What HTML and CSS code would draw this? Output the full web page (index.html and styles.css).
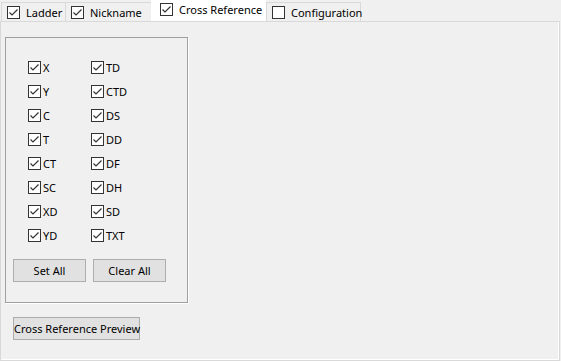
FILE: index.html
```html
<!DOCTYPE html>
<html lang="en">
<head>
    <meta charset="UTF-8">
    <title>Cross Reference</title>
    <link rel="stylesheet" href="styles.css">
</head>
<body>
    <div class="tabs">
        <div class="tab tab-ladder">
            <svg class="cb" width="13" height="13" viewBox="0 0 13 13"><rect x="0.5" y="0.5" width="12" height="12" fill="#fff" stroke="#333"/><path d="M2.5 6.5 L5 9 L10.5 3.5" fill="none" stroke="#333" stroke-width="1.2"/></svg>
            <span>Ladder</span>
        </div>
        <div class="tab tab-nick">
            <svg class="cb" width="13" height="13" viewBox="0 0 13 13"><rect x="0.5" y="0.5" width="12" height="12" fill="#fff" stroke="#333"/><path d="M2.5 6.5 L5 9 L10.5 3.5" fill="none" stroke="#333" stroke-width="1.2"/></svg>
            <span>Nickname</span>
        </div>
        <div class="tab tab-xref active">
            <svg class="cb" width="13" height="13" viewBox="0 0 13 13"><rect x="0.5" y="0.5" width="12" height="12" fill="#fff" stroke="#333"/><path d="M2.5 6.5 L5 9 L10.5 3.5" fill="none" stroke="#333" stroke-width="1.2"/></svg>
            <span>Cross Reference</span>
        </div>
        <div class="tab tab-config">
            <svg class="cb" width="13" height="13" viewBox="0 0 13 13"><rect x="0.5" y="0.5" width="12" height="12" fill="#fff" stroke="#333"/></svg>
            <span>Configuration</span>
        </div>
    </div>

    <div class="pane">
        <div class="group">
            <div class="check-grid">
                <label class="check"><svg class="cb" width="13" height="13" viewBox="0 0 13 13"><rect x="0.5" y="0.5" width="12" height="12" fill="#fff" stroke="#333"/><path d="M2.5 6.5 L5 9 L10.5 3.5" fill="none" stroke="#333" stroke-width="1.2"/></svg><span>X</span></label>
                <label class="check"><svg class="cb" width="13" height="13" viewBox="0 0 13 13"><rect x="0.5" y="0.5" width="12" height="12" fill="#fff" stroke="#333"/><path d="M2.5 6.5 L5 9 L10.5 3.5" fill="none" stroke="#333" stroke-width="1.2"/></svg><span>TD</span></label>
                <label class="check"><svg class="cb" width="13" height="13" viewBox="0 0 13 13"><rect x="0.5" y="0.5" width="12" height="12" fill="#fff" stroke="#333"/><path d="M2.5 6.5 L5 9 L10.5 3.5" fill="none" stroke="#333" stroke-width="1.2"/></svg><span>Y</span></label>
                <label class="check"><svg class="cb" width="13" height="13" viewBox="0 0 13 13"><rect x="0.5" y="0.5" width="12" height="12" fill="#fff" stroke="#333"/><path d="M2.5 6.5 L5 9 L10.5 3.5" fill="none" stroke="#333" stroke-width="1.2"/></svg><span>CTD</span></label>
                <label class="check"><svg class="cb" width="13" height="13" viewBox="0 0 13 13"><rect x="0.5" y="0.5" width="12" height="12" fill="#fff" stroke="#333"/><path d="M2.5 6.5 L5 9 L10.5 3.5" fill="none" stroke="#333" stroke-width="1.2"/></svg><span>C</span></label>
                <label class="check"><svg class="cb" width="13" height="13" viewBox="0 0 13 13"><rect x="0.5" y="0.5" width="12" height="12" fill="#fff" stroke="#333"/><path d="M2.5 6.5 L5 9 L10.5 3.5" fill="none" stroke="#333" stroke-width="1.2"/></svg><span>DS</span></label>
                <label class="check"><svg class="cb" width="13" height="13" viewBox="0 0 13 13"><rect x="0.5" y="0.5" width="12" height="12" fill="#fff" stroke="#333"/><path d="M2.5 6.5 L5 9 L10.5 3.5" fill="none" stroke="#333" stroke-width="1.2"/></svg><span>T</span></label>
                <label class="check"><svg class="cb" width="13" height="13" viewBox="0 0 13 13"><rect x="0.5" y="0.5" width="12" height="12" fill="#fff" stroke="#333"/><path d="M2.5 6.5 L5 9 L10.5 3.5" fill="none" stroke="#333" stroke-width="1.2"/></svg><span>DD</span></label>
                <label class="check"><svg class="cb" width="13" height="13" viewBox="0 0 13 13"><rect x="0.5" y="0.5" width="12" height="12" fill="#fff" stroke="#333"/><path d="M2.5 6.5 L5 9 L10.5 3.5" fill="none" stroke="#333" stroke-width="1.2"/></svg><span>CT</span></label>
                <label class="check"><svg class="cb" width="13" height="13" viewBox="0 0 13 13"><rect x="0.5" y="0.5" width="12" height="12" fill="#fff" stroke="#333"/><path d="M2.5 6.5 L5 9 L10.5 3.5" fill="none" stroke="#333" stroke-width="1.2"/></svg><span>DF</span></label>
                <label class="check"><svg class="cb" width="13" height="13" viewBox="0 0 13 13"><rect x="0.5" y="0.5" width="12" height="12" fill="#fff" stroke="#333"/><path d="M2.5 6.5 L5 9 L10.5 3.5" fill="none" stroke="#333" stroke-width="1.2"/></svg><span>SC</span></label>
                <label class="check"><svg class="cb" width="13" height="13" viewBox="0 0 13 13"><rect x="0.5" y="0.5" width="12" height="12" fill="#fff" stroke="#333"/><path d="M2.5 6.5 L5 9 L10.5 3.5" fill="none" stroke="#333" stroke-width="1.2"/></svg><span>DH</span></label>
                <label class="check"><svg class="cb" width="13" height="13" viewBox="0 0 13 13"><rect x="0.5" y="0.5" width="12" height="12" fill="#fff" stroke="#333"/><path d="M2.5 6.5 L5 9 L10.5 3.5" fill="none" stroke="#333" stroke-width="1.2"/></svg><span>XD</span></label>
                <label class="check"><svg class="cb" width="13" height="13" viewBox="0 0 13 13"><rect x="0.5" y="0.5" width="12" height="12" fill="#fff" stroke="#333"/><path d="M2.5 6.5 L5 9 L10.5 3.5" fill="none" stroke="#333" stroke-width="1.2"/></svg><span>SD</span></label>
                <label class="check"><svg class="cb" width="13" height="13" viewBox="0 0 13 13"><rect x="0.5" y="0.5" width="12" height="12" fill="#fff" stroke="#333"/><path d="M2.5 6.5 L5 9 L10.5 3.5" fill="none" stroke="#333" stroke-width="1.2"/></svg><span>YD</span></label>
                <label class="check"><svg class="cb" width="13" height="13" viewBox="0 0 13 13"><rect x="0.5" y="0.5" width="12" height="12" fill="#fff" stroke="#333"/><path d="M2.5 6.5 L5 9 L10.5 3.5" fill="none" stroke="#333" stroke-width="1.2"/></svg><span>TXT</span></label>
            </div>
            <div class="group-buttons">
                <button class="btn btn-small">Set All</button>
                <button class="btn btn-small">Clear All</button>
            </div>
        </div>
        <button class="btn btn-preview">Cross Reference Preview</button>
    </div>
</body>
</html>
```

FILE: styles.css
```css
* {
    margin: 0;
    padding: 0;
    box-sizing: border-box;
}

body {
    font-family: "Noto Sans", sans-serif;
    font-size: 11px;
    color: #000;
    background: #f0f0f0;
    width: 561px;
    height: 361px;
    overflow: hidden;
}

.cb {
    display: block;
    flex-shrink: 0;
}

/* tab strip */
.tabs {
    display: flex;
    align-items: flex-end;
    height: 21px;
    padding-left: 1px;
    position: relative;
    z-index: 1;
}

.tab {
    display: flex;
    align-items: center;
    height: 19px;
    border: 1px solid #d9d9d9;
    border-bottom: none;
    border-right: none;
    background: #f0f0f0;
    padding-left: 5px;
    gap: 6px;
}

.tab-ladder { width: 64px; }
.tab-nick { width: 86px; }
.tab-xref { width: 115px; }
.tab-config { width: 95px; border-right: 1px solid #d9d9d9; }

.tab.active {
    height: 22px;
    background: #fff;
    border-color: #fff;
    padding-left: 8px;
    padding-bottom: 2px;
}

/* tab page */
.pane {
    width: 560px;
    height: 340px;
    border: 1px solid #d9d9d9;
    box-shadow: inset -1px -1px 0 #fff;
    padding: 15px 0 0 4px;
}

.group {
    width: 183px;
    height: 266px;
    border: 1px solid #a0a0a0;
    box-shadow: 1px 1px 0 #fff;
    padding: 23px 0 0 22px;
}

.check-grid {
    display: grid;
    grid-template-columns: 63px 63px;
    grid-auto-rows: 24px;
}

.check {
    display: flex;
    align-items: flex-start;
    gap: 2px;
    line-height: 13px;
}

.group-buttons {
    display: flex;
    gap: 7px;
    margin: 6px 0 0 -15px;
}

.btn {
    font-family: inherit;
    font-size: 11px;
    color: #000;
    background: #e1e1e1;
    border: 1px solid #adadad;
    height: 23px;
    padding: 0;
    white-space: nowrap;
}

.btn-small {
    width: 73px;
}

.btn-preview {
    display: block;
    width: 127px;
    margin: 14px 0 0 8px;
}
```
